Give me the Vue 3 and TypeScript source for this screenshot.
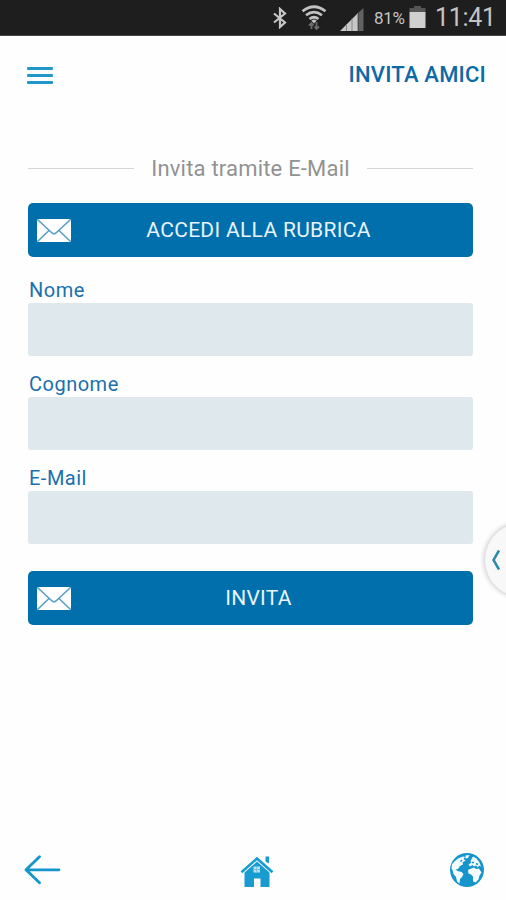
<script setup lang="ts">
import { ref } from 'vue'

interface Field {
  id: string
  label: string
  type: string
}

const fields: Field[] = [
  { id: 'nome', label: 'Nome', type: 'text' },
  { id: 'cognome', label: 'Cognome', type: 'text' },
  { id: 'email', label: 'E-Mail', type: 'email' },
]
const values = ref<Record<string, string>>({ nome: '', cognome: '', email: '' })
</script>

<template>
  <div class="screen">
    <div class="status">
      <svg class="bluetooth" width="16" height="22" viewBox="0 0 16 22">
        <path d="M2 6.5 13 15.5 8 20V2l5 4.5L2 15.5" fill="none" stroke="#c6c6c6" stroke-width="2.2" />
      </svg>
      <svg class="wifi" width="26" height="27" viewBox="0 0 26 27">
        <g fill="none" stroke="#c2c2c2" stroke-width="2.7">
          <path d="M1.500 6.300Q13-2.800 24.500 6.300" />
          <path d="M5 10.300Q13 4 21 10.300" />
          <path d="M8.500 14Q13 10.500 17.500 14" />
        </g>
        <path d="M10.300 15.500Q13 13.500 15.700 15.500L13 18.500z" fill="#c2c2c2" />
        <path d="M10.500 24v-6M8 20.500l2.500-2.500 2 2.500M15.500 17v6.500M13.500 21.500l2 2.500 2.500-2.500" fill="none" stroke="#6c6c6c" stroke-width="1.800" />
      </svg>
      <svg class="signal" width="24" height="24" viewBox="0 0 24 24">
        <path d="M0 23 18 5v18z" fill="#c8c8c8" />
        <path d="M18.500 4.500 23.500 0v23h-5z" fill="#626262" />
        <path d="M6.500 16v7M12 10.500V23M17.700 5v18" stroke="#888" stroke-width="1" />
      </svg>
      <span class="percent">81%</span>
      <svg class="battery" width="17" height="23" viewBox="0 0 17 23">
        <path d="M5 0h7v2h4.500v5H.5V2H5z" fill="#555" />
        <path d="M.5 6h16v16H.5z" fill="#d0d0d0" />
      </svg>
      <span class="clock">11:41</span>
    </div>

    <header class="header">
      <button class="menu" aria-label="Menu"><i></i><i></i><i></i></button>
      <h1>INVITA AMICI</h1>
    </header>

    <main class="content">
      <div class="divider"><span>Invita tramite E-Mail</span></div>
      <button class="action">
        <svg class="mail" width="36" height="25" viewBox="0 0 36 25">
          <rect x="1" y="1" width="34" height="23" rx="1.500" fill="#fff" />
          <path d="M1.500 1.500 15.500 14.500Q18 17 20.500 14.500L34.500 1.500M1.500 23.500 13 12.500M34.500 23.500 23 12.500" fill="none" stroke="#5ca0ca" stroke-width="1.700" />
        </svg>
        <span>ACCEDI ALLA RUBRICA</span>
      </button>
      <form class="form" @submit.prevent>
        <label v-for="f in fields" :key="f.id" class="field">
          <span class="caption">{{ f.label }}</span>
          <input v-model="values[f.id]" :type="f.type" />
        </label>
        <button class="action invite" type="submit">
          <svg class="mail" width="36" height="25" viewBox="0 0 36 25">
            <rect x="1" y="1" width="34" height="23" rx="1.500" fill="#fff" />
            <path d="M1.500 1.500 15.500 14.500Q18 17 20.500 14.500L34.500 1.500M1.500 23.500 13 12.500M34.500 23.500 23 12.500" fill="none" stroke="#5ca0ca" stroke-width="1.700" />
          </svg>
          <span>INVITA</span>
        </button>
      </form>
    </main>

    <nav class="bottom">
      <svg width="37" height="30" viewBox="0 0 37 30">
        <path d="M35 14.800H2M15.500 1.800 2 14.800l13.500 13" fill="none" stroke="#1595cd" stroke-width="2.800" stroke-linecap="round" stroke-linejoin="round" />
      </svg>
      <svg class="home" width="34" height="32" viewBox="0 0 34 32">
        <path d="M25.500.5h3.500v7l-3.500-2z" fill="#189bd0" />
        <path d="M1.500 16.200 17 2.500l15.500 13.700" fill="none" stroke="#189bd0" stroke-width="2.600" />
        <path d="M4.500 16.500 17 5.500l12.500 11V31H20.500v-8.500h-6.500V31H4.500z" fill="#189bd0" />
        <path d="M13.500 10.500h6.500v6h-6.500z" fill="#b9e1f1" />
        <path d="M16.750 10.500v6M13.500 13.500h6.500" stroke="#66bddf" stroke-width=".8" />
      </svg>
      <svg width="34" height="36" viewBox="0 0 34 36">
        <circle cx="17" cy="18" r="17" fill="#1595cc" />
        <g fill="#f4fcff">
          <path d="M8 6.500 13 4.500l2 .5-1.500 2 2 1.500-3 2 .5 2-3 1.500-2 3-2.500.5 2 1.500 4 1 2 2-1.500 3-2 2-.5 4.500-2.500-2-1-4.500-2.500-3-1-4-1-1.500.5-4.500L5 9z" />
          <path d="M15.500 3.500 19.500 3l-1.500 3-2.500.5zM21 8l2-3.500 3.500 2 3 4 1.500 4-2-1-1 2-2-2-2 1-1.500-1.500-2.500 1.500-1.500-2 3-2-1-1.500z" />
          <path d="M20 17l4-1.500 2 1.500 3-.5 2.500 4-2 3-1 4-3 3-2.500-1v-5l-2-2-2.500-1-.5-3.500z" />
        </g>
        <path d="M22 10.500h2M26 11.500l2 1M12 8l-1.500 1.500" stroke="#1595cc" stroke-width="1.400" />
      </svg>
    </nav>

    <button class="drawer" aria-label="Apri">
      <svg width="10" height="22" viewBox="0 0 10 22">
        <path d="M8 1.500 2.500 11 8 20.500" fill="none" stroke="#2b8da6" stroke-width="2.500" />
      </svg>
    </button>
  </div>
</template>

<style>
body { margin: 0; }
</style>

<style scoped>
.screen {
  position: relative;
  display: flex;
  flex-direction: column;
  width: 506px;
  height: 900px;
  overflow: hidden;
  background: #fefefe;
  font-family: Roboto, "Liberation Sans", sans-serif;
}
button { border: 0; padding: 0; font-family: inherit; }
svg { display: block; flex: none; }
.status {
  display: flex;
  box-sizing: border-box;
  height: 36px;
  padding-left: 272px;
  background: #1e1e1e;
  border-bottom: 1px solid #454545;
  color: #c4c4c4;
}
.bluetooth { margin-top: 7px; }
.wifi { margin: 5px 0 0 13px; }
.signal { margin: 8px 0 0 13px; }
.percent { width: 32px; margin-left: 10px; font-size: 17px; line-height: 37px; letter-spacing: -.3px; }
.battery { margin: 6px 0 0 3px; }
.clock { margin-left: 9px; font-size: 25px; line-height: 36px; letter-spacing: -.3px; white-space: nowrap; }
.header {
  display: flex;
  align-items: center;
  justify-content: space-between;
  height: 78px;
  padding: 0 20px 0 27px;
}
.menu { display: flex; flex-direction: column; gap: 4px; width: 26px; background: none; }
.menu i { height: 3px; background: #2297cd; border-radius: 1px; }
h1 { margin: 0; font-size: 22px; font-weight: 500; line-height: 26px; letter-spacing: .2px; color: #0e69a7; }
.content { width: 445px; margin: 41px 0 0 28px; }
.divider {
  display: flex;
  align-items: center;
  gap: 17px;
  height: 26px;
  margin-bottom: 22px;
  font-size: 22px;
  letter-spacing: .2px;
  color: #929292;
  white-space: nowrap;
}
.divider::before, .divider::after { content: ""; flex: 1; height: 1px; margin-top: 1px; background: #d6d6d6; }
.action {
  display: grid;
  grid-template-columns: 36px 1fr 20px;
  align-items: center;
  width: 445px;
  height: 54px;
  padding: 0 8px;
  border-radius: 5px;
  background: #006fab;
  color: #e9f4ff;
  font-size: 21px;
  letter-spacing: .3px;
}
.field { display: block; margin-bottom: 16px; }
.form { padding-top: 21px; }
.caption { display: block; height: 25px; padding-left: 1px; font-size: 20px; line-height: 25px; letter-spacing: .5px; color: #1b70ad; }
input {
  display: block;
  box-sizing: border-box;
  width: 445px;
  height: 53px;
  padding: 0 12px;
  border: 0;
  border-radius: 3px;
  background: #dfe8ec;
  font: 20px Roboto, sans-serif;
}
.invite { margin-top: 27px; }
.bottom {
  display: flex;
  align-items: center;
  justify-content: space-between;
  height: 60px;
  margin-top: auto;
  padding: 0 22px 0 24px;
}
.home { margin: 3px -1px 0 1px; }
.drawer {
  position: absolute;
  left: 485px;
  top: 523px;
  display: flex;
  align-items: center;
  width: 74px;
  height: 74px;
  padding-left: 6px;
  border-radius: 50%;
  background: #f8f8f8;
  box-shadow: 0 0 5px 1px #c8c8c8;
}
</style>
